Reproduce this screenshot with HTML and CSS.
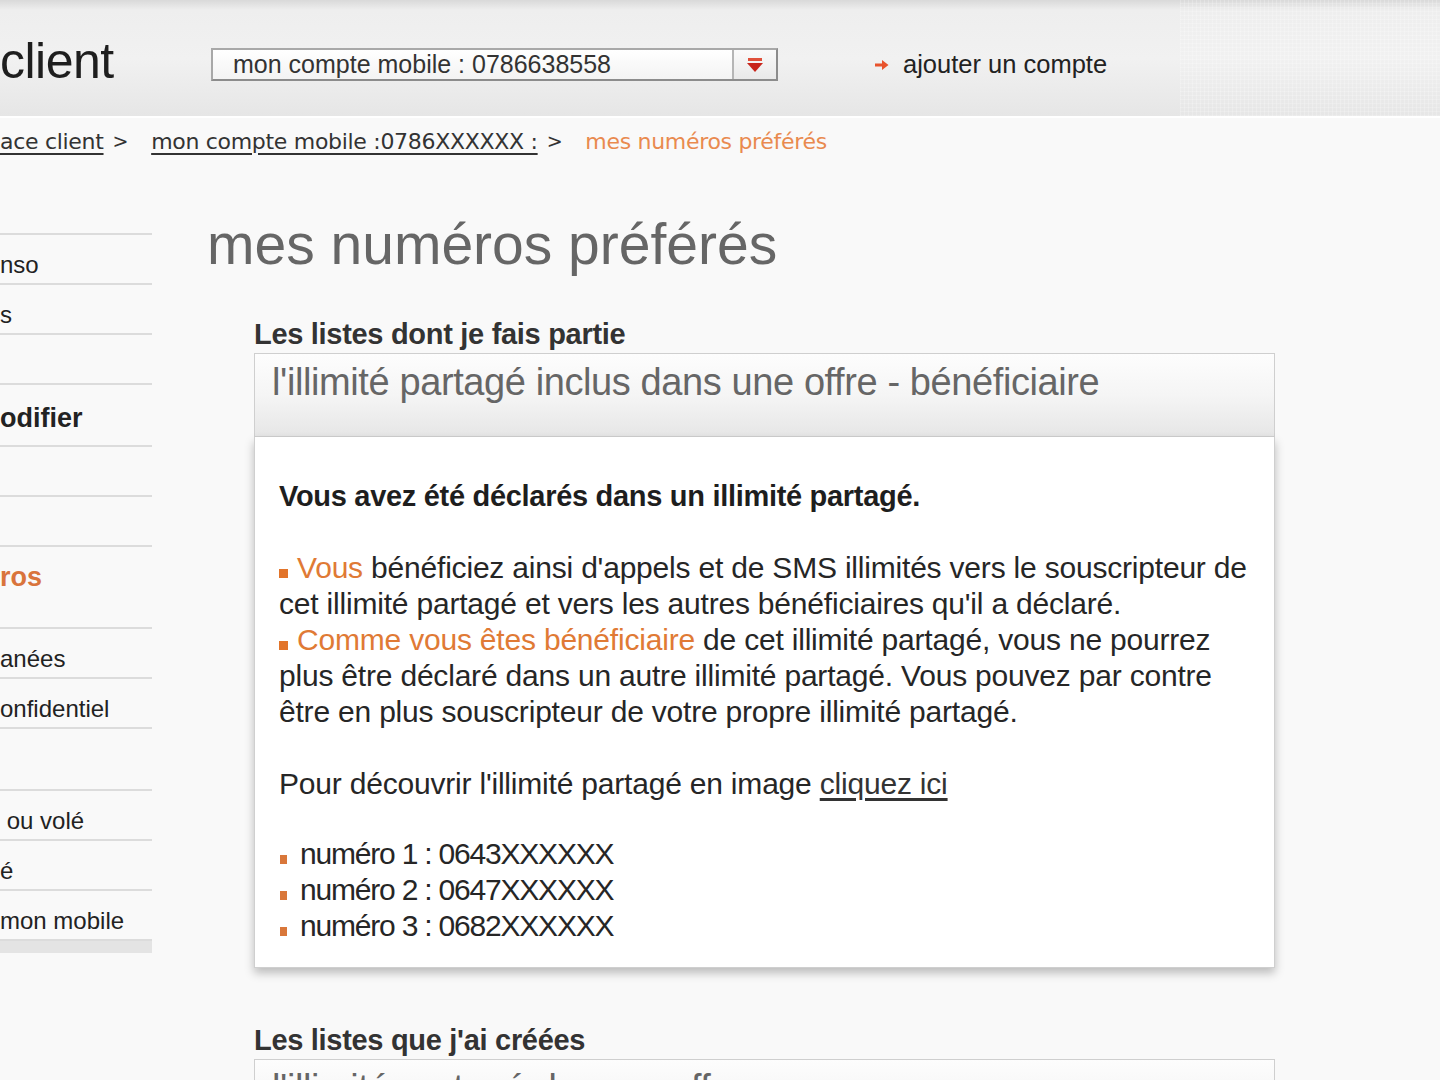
FILE: index.html
```html
<!DOCTYPE html>
<html lang="fr">
<head>
<meta charset="utf-8">
<title>mes numéros préférés</title>
<link rel="stylesheet" href="styles.css">
</head>
<body>
<header class="topbar">
  <div class="brand">client</div>
  <div class="account-select">
    <span class="account-label">mon compte mobile : 0786638558</span>
    <span class="account-btn">
      <svg width="22" height="20" viewBox="0 0 22 20"><rect x="4" y="3" width="14" height="3" fill="#e0503a"/><path d="M3 8 H19 L11 17 Z" fill="#c8251b"/></svg>
    </span>
  </div>
  <a class="add-account" href="#">
    <svg class="add-arrow" width="16" height="16" viewBox="0 0 16 16"><path d="M1 6.5 H8 V3 L14.5 8 L8 13 V9.5 H1 Z" fill="#e8532c"/></svg>
    ajouter un compte
  </a>
</header>

<nav class="breadcrumb">
  <a href="#">ace client</a>
  <span class="sep">&gt;</span>
  <a href="#">mon compte mobile :0786XXXXXX :</a>
  <span class="sep">&gt;</span>
  <span class="current">mes numéros préférés</span>
</nav>

<div class="layout">
  <aside class="sidebar">
    <div class="side-item">nso</div>
    <div class="side-item">s</div>
    <div class="side-item"></div>
    <div class="side-item side-big">odifier</div>
    <div class="side-item"></div>
    <div class="side-item"></div>
    <div class="side-item side-active">ros</div>
    <div class="side-item">anées</div>
    <div class="side-item">onfidentiel</div>
    <div class="side-item side-tall"></div>
    <div class="side-item">&nbsp;ou volé</div>
    <div class="side-item">é</div>
    <div class="side-item">mon mobile</div>
    <div class="side-end"></div>
  </aside>

  <main class="content">
    <h1 class="page-title">mes numéros préférés</h1>

    <section class="block">
      <h2 class="block-label">Les listes dont je fais partie</h2>
      <div class="panel">
        <div class="panel-head">l'illimité partagé inclus dans une offre - bénéficiaire</div>
        <div class="panel-body">
          <p class="lead">Vous avez été déclarés dans un illimité partagé.</p>
          <p class="para">
            <span class="sq"></span><span class="hl">Vous</span> bénéficiez ainsi d'appels et de SMS illimités vers le souscripteur de<br>
            cet illimité partagé et vers les autres bénéficiaires qu'il a déclaré.<br>
            <span class="sq"></span><span class="hl">Comme vous êtes bénéficiaire</span> de cet illimité partagé, vous ne pourrez<br>
            plus être déclaré dans un autre illimité partagé. Vous pouvez par contre<br>
            être en plus souscripteur de votre propre illimité partagé.
          </p>
          <p class="para">Pour découvrir l'illimité partagé en image <a href="#" class="link">cliquez ici</a></p>
          <ul class="numbers">
            <li>numéro 1 : 0643XXXXXX</li>
            <li>numéro 2 : 0647XXXXXX</li>
            <li>numéro 3 : 0682XXXXXX</li>
          </ul>
        </div>
      </div>
    </section>

    <section class="block block-second">
      <h2 class="block-label">Les listes que j'ai créées</h2>
      <div class="panel">
        <div class="panel-head">l'illimité partagé de mon offre</div>
      </div>
    </section>
  </main>
</div>
</body>
</html>
```

FILE: styles.css
```css
* { box-sizing: border-box; }

html, body {
  margin: 0;
  padding: 0;
  background: #f9f9f9;
  overflow: hidden;
}

body {
  font-family: "Liberation Sans", Arial, sans-serif;
  color: #222;
  height: 1080px;
}

a { color: inherit; }

/* ---------- header ---------- */
.topbar {
  height: 118px;
  display: flex;
  align-items: flex-start;
  padding-top: 31px;
  background:
    repeating-linear-gradient(90deg, rgba(255, 255, 255, 0.22) 0 1px, transparent 1px 4px) right top / 260px 100% no-repeat,
    repeating-linear-gradient(0deg, rgba(255, 255, 255, 0.18) 0 1px, transparent 1px 4px) right top / 260px 100% no-repeat,
    linear-gradient(to bottom, #d9d9d9 0, #eeeeee 10px, #f1f1f1 50%, #e6e6e6 100%);
  border-bottom: 2px solid #ffffff;
}

.brand {
  font-size: 50px;
  line-height: 60px;
  color: #1e1e1e;
  width: 211px;
  letter-spacing: -0.5px;
}

.account-select {
  width: 567px;
  height: 33px;
  margin-top: 17px;
  display: flex;
  align-items: stretch;
  border: 2px solid #8c8c8c;
  border-top-color: #a8a8a8;
  border-left-color: #a8a8a8;
  background: linear-gradient(to bottom, #ffffff, #f3f3f3);
}

.account-label {
  flex: 1;
  padding-left: 20px;
  font-size: 25px;
  line-height: 29px;
  color: #333;
}

.account-btn {
  width: 44px;
  display: flex;
  align-items: center;
  justify-content: center;
  border-left: 2px solid #b5b5b5;
  background: linear-gradient(to bottom, #fafafa, #e9e9e9);
}

.add-account {
  margin-left: 96px;
  margin-top: 17px;
  height: 33px;
  display: flex;
  align-items: center;
  gap: 13px;
  font-size: 25.5px;
  color: #222;
  text-decoration: none;
}

/* ---------- breadcrumb ---------- */
.breadcrumb {
  height: 46px;
  display: flex;
  align-items: center;
  font-family: "DejaVu Sans", Verdana, sans-serif;
  font-size: 22px;
  color: #333;
  letter-spacing: -0.3px;
}

.breadcrumb a {
  text-decoration: underline;
  text-underline-offset: 4px;
}

.breadcrumb .sep {
  margin: 0 23px 0 9px;
  font-size: 19px;
}

.breadcrumb .current {
  color: #e98a4f;
}

/* ---------- layout ---------- */
.layout {
  display: flex;
  align-items: flex-start;
  padding-top: 48px;
}

.sidebar {
  width: 152px;
  flex: none;
  margin-top: 21px;
  border-top: 2px solid #dcdcdc;
}

.side-item {
  height: 50px;
  padding-top: 18px;
  border-bottom: 2px solid #dcdcdc;
  font-size: 24px;
  line-height: 24px;
  color: #222;
  white-space: nowrap;
  overflow: hidden;
}

.side-big {
  height: 62px;
  padding-top: 18px;
  font-size: 27px;
  line-height: 30px;
  font-weight: bold;
}

.side-active {
  height: 82px;
  padding-top: 15px;
  font-size: 27px;
  line-height: 30px;
  font-weight: bold;
  color: #d9743c;
}

.side-tall { height: 62px; }

.side-end {
  height: 12px;
  background: #e4e4e4;
}

.content {
  margin-left: 55px;
  flex: 1;
}

.page-title {
  margin: 0;
  font-size: 57px;
  font-weight: normal;
  line-height: 64px;
  color: #666;
}

.block {
  margin-top: 41px;
  margin-left: 47px;
  width: 1021px;
}

.block-second { margin-top: 55px; }

.block-label {
  margin: 0 0 2px;
  font-size: 29px;
  line-height: 34px;
  letter-spacing: -0.3px;
  font-weight: bold;
  color: #333;
}

.panel-head {
  height: 84px;
  padding: 6px 0 0 17px;
  border: 1px solid #cfcfcf;
  background: linear-gradient(to bottom, #fdfdfd 0, #f5f5f5 50%, #e6e6e6 100%);
  font-size: 38px;
  line-height: 44px;
  letter-spacing: -0.4px;
  color: #666;
}

.panel-body {
  height: 531px;
  padding: 41px 20px 0 24px;
  background: #ffffff;
  border: 1px solid #cfcfcf;
  border-top: none;
  box-shadow: 0 5px 9px rgba(0, 0, 0, 0.25);
  font-size: 30px;
  line-height: 36px;
  letter-spacing: -0.2px;
  color: #262626;
  white-space: nowrap;
}

.panel-body p { margin: 0 0 36px; }

.panel-body .para + .para { margin-bottom: 34px; }

.lead {
  font-weight: bold;
  font-size: 29px;
  letter-spacing: -0.3px;
  color: #1e1e1e;
}

.sq {
  display: inline-block;
  width: 9px;
  height: 9px;
  background: #e2742a;
  margin-right: 9px;
}

.hl { color: #e07a35; }

.link {
  color: #333;
  text-decoration: underline;
  text-underline-offset: 4px;
}

.numbers {
  list-style: none;
  margin: 0;
  padding: 0;
  letter-spacing: -1.2px;
}

.numbers li::before {
  content: "";
  display: inline-block;
  width: 7px;
  height: 9px;
  background: #d9773a;
  margin: 0 13px 0 1px;
}
```
